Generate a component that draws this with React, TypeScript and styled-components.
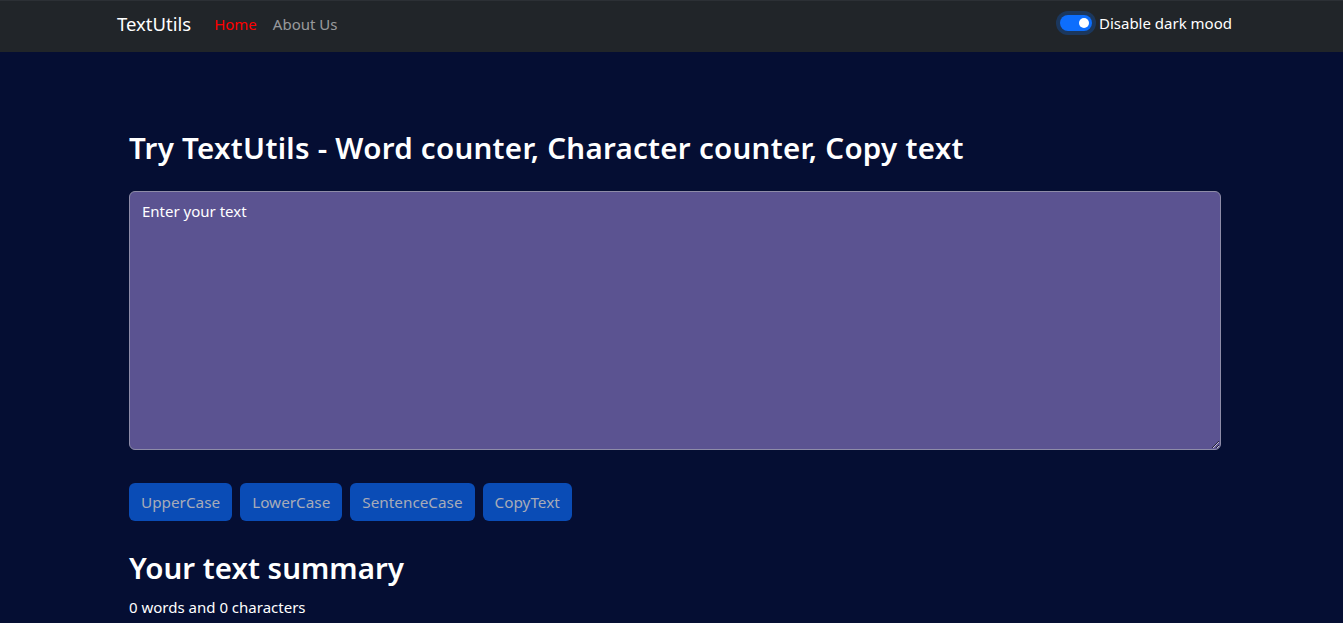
import React, { useState } from "react";
import styled, { createGlobalStyle } from "styled-components";

const Global = createGlobalStyle`
  html, body { margin: 0; padding: 0; }
  body {
    background: #050e33;
    font-family: "Noto Sans", "Open Sans", sans-serif;
    color: #ffffff;
  }
  * { box-sizing: border-box; }
`;

const Nav = styled.nav`
  height: 52px;
  background: #212529;
  display: flex;
  align-items: center;
  justify-content: space-between;
  padding: 0 111px 6px 117px;
  border-top: 1px solid #2c3035;
`;

const Left = styled.div`
  display: flex;
  align-items: center;
`;

const Brand = styled.a`
  font-size: 18.5px;
  color: #ffffff;
  margin-right: 23px;
  text-decoration: none;
`;

const NavLink = styled.a<{ $active?: boolean }>`
  font-size: 15px;
  color: ${(p) => (p.$active ? "#ff0000" : "rgba(255,255,255,0.55)")};
  margin-right: 16px;
  text-decoration: none;
`;

const SwitchWrap = styled.label`
  display: flex;
  align-items: center;
  gap: 7px;
  font-size: 15px;
  color: #ffffff;
  margin-top: -1px;
`;

const Track = styled.span`
  width: 32px;
  height: 16px;
  border-radius: 8px;
  background: #0d6efd;
  box-shadow: 0 0 0 4px rgba(13, 110, 253, 0.25);
  position: relative;
  display: inline-block;
`;

const Knob = styled.span`
  position: absolute;
  right: 3px;
  top: 3px;
  width: 10px;
  height: 10px;
  border-radius: 50%;
  background: #ffffff;
`;

const Main = styled.main`
  padding: 78px 0 0 129px;
  width: 1221px;
`;

const Heading = styled.h1<{ $size: number; $spacing: number }>`
  font-size: ${(p) => p.$size}px;
  letter-spacing: ${(p) => p.$spacing}px;
  font-weight: 600;
  margin: 0 0 8px;
  line-height: 1.2;
  color: #ffffff;
`;

const TextArea = styled.textarea`
  display: block;
  width: 1092px;
  height: 259px;
  margin-top: 26px;
  background: #5b5391;
  border: 1px solid #8e8ca8;
  border-radius: 6px;
  color: #ffffff;
  font-family: inherit;
  font-size: 15px;
  line-height: 1.5;
  padding: 8px 12px;
  resize: vertical;
  outline: none;
  &::placeholder { color: #ffffff; opacity: 1; }
`;

const BtnRow = styled.div`
  display: flex;
  gap: 8px;
  margin: 33px 0 29px;
`;

const Btn = styled.button`
  height: 38px;
  padding: 0 12px;
  border: none;
  border-radius: 6px;
  background: #0a4cb6;
  color: #a7abb8;
  font-family: inherit;
  font-size: 15.3px;
`;

const Summary = styled.p`
  font-size: 15px;
  margin: 11px 0 0;
`;

export default function App() {
  const [text, setText] = useState("");
  const words = text.split(/\s+/).filter((w) => w.length > 0).length;
  return (
    <>
      <Global />
      <Nav>
        <Left>
          <Brand href="#">TextUtils</Brand>
          <NavLink $active href="#">Home</NavLink>
          <NavLink href="#">About Us</NavLink>
        </Left>
        <SwitchWrap>
          <Track>
            <Knob />
          </Track>
          Disable dark mood
        </SwitchWrap>
      </Nav>
      <Main>
        <Heading $size={29.5} $spacing={0.28}>
          Try TextUtils - Word counter, Character counter, Copy text
        </Heading>
        <TextArea
          placeholder="Enter your text"
          value={text}
          onChange={(e) => setText(e.target.value)}
        />
        <BtnRow>
          <Btn disabled>UpperCase</Btn>
          <Btn disabled>LowerCase</Btn>
          <Btn disabled>SentenceCase</Btn>
          <Btn disabled>CopyText</Btn>
        </BtnRow>
        <Heading $size={29.5} $spacing={0}>Your text summary</Heading>
        <Summary>
          {words} words and {text.length} characters
        </Summary>
      </Main>
    </>
  );
}
